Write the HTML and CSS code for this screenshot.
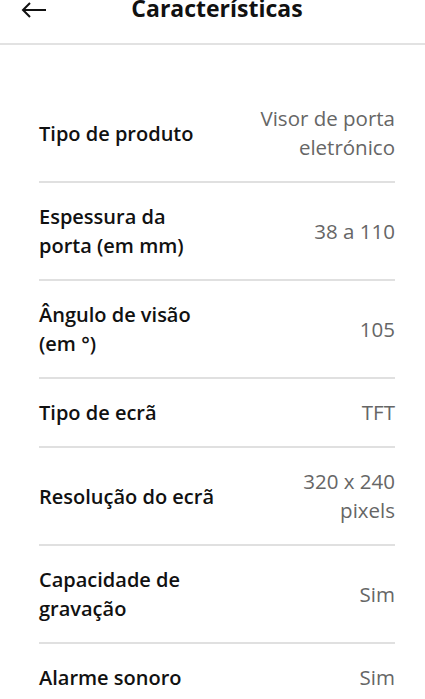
FILE: index.html
```html
<!DOCTYPE html>
<html lang="pt">
<head>
    <meta charset="UTF-8">
    <meta name="viewport" content="width=device-width, initial-scale=1.0">
    <title>Características</title>
    <link rel="stylesheet" href="styles.css">
</head>
<body>
    <div class="topbar">
        <span class="back">
            <svg width="26" height="16" viewBox="0 0 26 16"><path d="M25 8H2M9 1L2 8l7 7" fill="none" stroke="#111" stroke-width="2"/></svg>
        </span>
        <h1 class="title">Características</h1>
    </div>

    <div class="specs">
        <div class="row">
            <div class="label">Tipo de produto</div>
            <div class="value">Visor de porta<br>eletrónico</div>
        </div>
        <div class="row">
            <div class="label">Espessura da<br>porta (em mm)</div>
            <div class="value">38 a 110</div>
        </div>
        <div class="row">
            <div class="label">Ângulo de visão<br>(em °)</div>
            <div class="value">105</div>
        </div>
        <div class="row">
            <div class="label">Tipo de ecrã</div>
            <div class="value">TFT</div>
        </div>
        <div class="row">
            <div class="label">Resolução do ecrã</div>
            <div class="value">320 x 240<br>pixels</div>
        </div>
        <div class="row">
            <div class="label">Capacidade de<br>gravação</div>
            <div class="value">Sim</div>
        </div>
        <div class="row">
            <div class="label">Alarme sonoro</div>
            <div class="value">Sim</div>
        </div>
    </div>
</body>
</html>
```

FILE: styles.css
```css
body {
    margin: 0;
    background: #fff;
    font-family: "Open Sans", "Noto Sans", sans-serif;
    color: #111;
}

.topbar {
    height: 20px;
    padding-bottom: 23px;
    border-bottom: 2px solid #e2e2e2;
    display: flex;
    align-items: center;
    position: relative;
}
.back {
    margin-left: 21px;
    display: flex;
}
.title {
    position: absolute;
    top: -2px;
    left: 9px;
    right: 0;
    text-align: center;
    margin: 0;
    font-size: 23px;
    font-weight: 700;
    line-height: 20px;
}

.specs {
    padding: 40px 30px 0 39px;
}
.row {
    display: flex;
    justify-content: space-between;
    align-items: center;
    padding: 19px 0;
    border-bottom: 2px solid #e0e0e0;
    font-size: 20px;
    line-height: 29px;
}
.label {
    font-weight: 600;
}
.value {
    color: #666;
    text-align: right;
    font-size: 20.5px;
}
```
